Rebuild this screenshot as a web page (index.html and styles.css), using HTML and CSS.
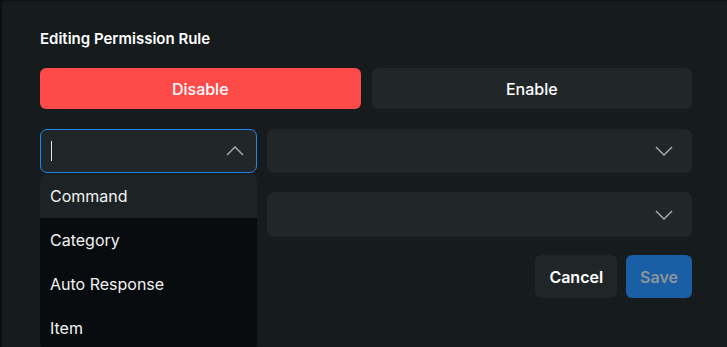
FILE: index.html
```html
<!DOCTYPE html>
<html lang="en">
<head>
    <meta charset="UTF-8">
    <meta name="viewport" content="width=device-width, initial-scale=1.0">
    <title>Editing Permission Rule</title>
    <link rel="stylesheet" href="styles.css">
</head>
<body>

<div class="modal">
    <h2 class="modal-title">Editing Permission Rule</h2>

    <!-- Tiltás / engedélyezés -->
    <div class="toggle">
        <button class="toggle-btn active">Disable</button>
        <button class="toggle-btn">Enable</button>
    </div>

    <div class="field-row">
        <div class="select open">
            <span class="caret-line"></span>
            <svg class="chevron" width="18" height="10" viewBox="0 0 18 10"><path d="M1 9 L9 1 L17 9" fill="none" stroke="#a3a8ab" stroke-width="1.5"/></svg>
            <ul class="dropdown">
                <li class="hover">Command</li>
                <li>Category</li>
                <li>Auto Response</li>
                <li>Item</li>
            </ul>
        </div>
        <div class="select">
            <svg class="chevron" width="18" height="10" viewBox="0 0 18 10"><path d="M1 1 L9 9 L17 1" fill="none" stroke="#a3a8ab" stroke-width="1.5"/></svg>
        </div>
    </div>

    <div class="field-row second">
        <div></div>
        <div class="select">
            <svg class="chevron" width="18" height="10" viewBox="0 0 18 10"><path d="M1 1 L9 9 L17 1" fill="none" stroke="#a3a8ab" stroke-width="1.5"/></svg>
        </div>
    </div>

    <div class="actions">
        <button class="btn cancel">Cancel</button>
        <button class="btn save" disabled>Save</button>
    </div>
</div>

</body>
</html>
```

FILE: styles.css
```css
body {
    margin: 0;
    background-color: #0c1012;
    font-family: Inter, "Noto Sans", sans-serif;
    color: #ffffff;
    overflow: hidden;
}
.modal {
    margin: 1px 0 0 2px;
    height: 346px;
    background-color: #161b1e;
    border-top-left-radius: 4px;
    padding: 30px 35px 0 38px;
    box-sizing: border-box;
}
.modal-title {
    margin: 0;
    font-size: 15px;
    font-weight: 600;
    line-height: 16px;
}
/* két gomb egymás mellett */
.toggle {
    display: grid;
    grid-template-columns: 1fr 1fr;
    gap: 11px;
    margin-top: 21px;
}
.toggle-btn {
    height: 41px;
    border: none;
    border-radius: 6px;
    background-color: #212729;
    color: #ffffff;
    font-family: inherit;
    font-size: 16px;
    font-weight: 500;
}
.toggle-btn.active {
    background-color: #ff4a4a;
}
.field-row {
    display: grid;
    grid-template-columns: 217px 1fr;
    gap: 10px;
    margin-top: 20px;
}
.field-row.second {
    margin-top: 19px;
}
.select {
    position: relative;
    height: 44px;
    border-radius: 7px;
    background-color: #212629;
    box-sizing: border-box;
    display: flex;
    align-items: center;
    justify-content: flex-end;
    padding-right: 19px;
}
.field-row.second .select {
    height: 45px;
}
.select.open {
    border: 1px solid #1f86ee;
    justify-content: space-between;
    padding-left: 10px;
    padding-right: 12px;
}
.caret-line {
    width: 1px;
    height: 20px;
    background-color: #e6e6e6;
}
.dropdown {
    position: absolute;
    top: 44px;
    left: -1px;
    width: 217px;
    margin: 0;
    padding: 0;
    list-style: none;
    background-color: #080c0f;
    border-radius: 6px;
    overflow: hidden;
    z-index: 10;
}
.dropdown li {
    height: 44px;
    line-height: 44px;
    padding-left: 10px;
    font-size: 16px;
    color: #f2f2f2;
}
.dropdown li.hover {
    background-color: #1d2225;
}
.actions {
    display: flex;
    justify-content: flex-end;
    gap: 9px;
    margin-top: 18px;
}
.btn {
    height: 43px;
    border: none;
    border-radius: 6px;
    font-family: inherit;
    font-size: 16px;
    font-weight: 600;
    padding: 0 14px;
}
.cancel {
    background-color: #202528;
    color: #ffffff;
}
.save {
    background-color: #1a5fa5;
    color: #8d969c;
}
```
